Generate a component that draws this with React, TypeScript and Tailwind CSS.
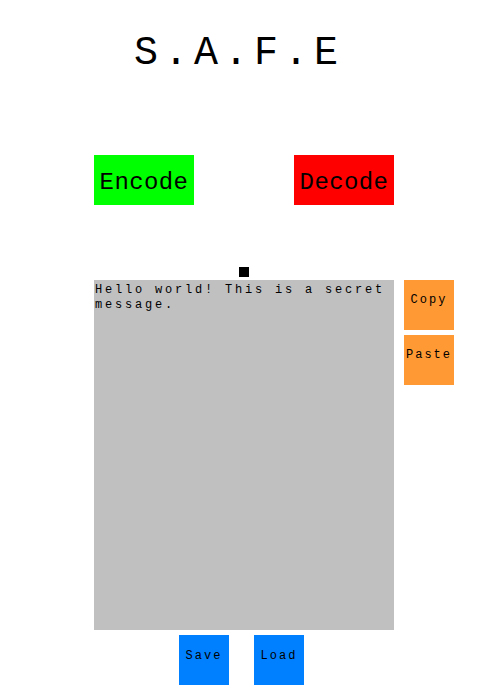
import React from "react";

const mono = { fontFamily: '"Liberation Mono", "Courier New", monospace' };

export default function App() {
  return (
    <div className="w-[478px] h-[693px] bg-white text-black flex flex-col" style={mono}>
      <div className="pt-[31px] h-[75px] text-center text-[40px] leading-[45px] tracking-[6px]">S.A.F.E</div>
      <div className="mt-[80px] flex pl-[94px] gap-[100px]">
        <button className="w-[100px] h-[50px] bg-[#00ff00] text-[24px] tracking-[0.4px] pt-[6px] flex items-center justify-center">Encode</button>
        <button className="w-[100px] h-[50px] bg-[#ff0000] text-[24px] tracking-[0.4px] pt-[6px] flex items-center justify-center">Decode</button>
      </div>
      <div className="mt-[62px] pl-[239px]">
        <div className="w-[10px] h-[10px] bg-black" />
      </div>
      <div className="mt-[3px] flex pl-[94px] gap-[10px]">
        <textarea
          className="w-[300px] h-[350px] bg-[#c0c0c0] pt-[3px] px-[1px] pb-[2px] text-[12px] leading-[15px] tracking-[2.8px] resize-none outline-none"
          style={mono}
          defaultValue="Hello world! This is a secret message."
        />
        <div className="flex flex-col gap-[5px]">
          <button className="w-[50px] h-[50px] bg-[#ff9933] text-[12px] leading-[14px] tracking-[2px] pt-[13px] flex justify-center items-start">Copy</button>
          <button className="w-[50px] h-[50px] bg-[#ff9933] text-[12px] leading-[14px] tracking-[2px] pt-[13px] flex justify-center items-start">Paste</button>
        </div>
      </div>
      <div className="mt-[5px] flex pl-[179px] gap-[25px]">
        <button className="w-[50px] h-[50px] bg-[#0080ff] text-[12px] leading-[14px] tracking-[2px] pt-[14px] flex justify-center items-start">Save</button>
        <button className="w-[50px] h-[50px] bg-[#0080ff] text-[12px] leading-[14px] tracking-[2px] pt-[14px] flex justify-center items-start">Load</button>
      </div>
    </div>
  );
}
